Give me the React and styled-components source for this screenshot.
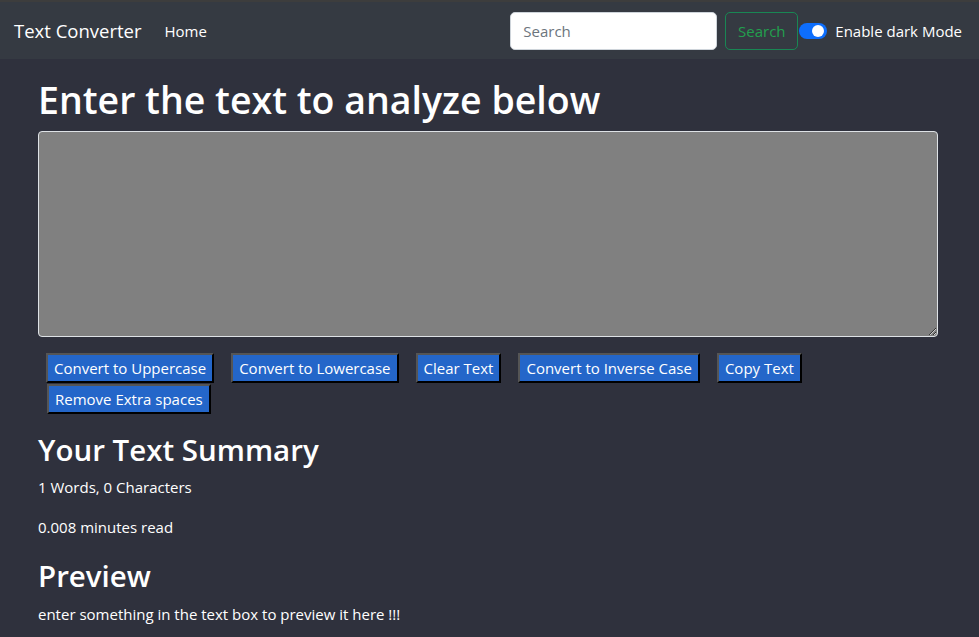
import React, { useState } from 'react';
import styled, { createGlobalStyle } from 'styled-components';

const GlobalStyle = createGlobalStyle`
  * { box-sizing: border-box; }
  html, body {
    margin: 0;
    padding: 0;
    height: 100%;
    background: #2f313d;
  }
  body {
    font-family: "Open Sans", "Noto Sans", sans-serif;
    color: #ffffff;
  }
`;

const Page = styled.div`
  min-height: 637px;
  background: #2f313d;
  border-top: 2px solid #3d3d3d;
  border-bottom: 3px solid #8a8a8a;
  display: flex;
  flex-direction: column;
`;

const Nav = styled.nav`
  background: #353a42;
  height: 57px;
  display: flex;
  align-items: center;
  padding: 0 17px 0 14px;
`;

const Brand = styled.a`
  font-size: 18.5px;
  color: #fff;
  text-decoration: none;
  margin-right: 23px;
`;

const NavLink = styled.a`
  font-size: 15px;
  color: #fff;
  text-decoration: none;
`;

const NavRight = styled.div`
  margin-left: auto;
  display: flex;
  align-items: center;
`;

const SearchInput = styled.input`
  width: 207px;
  height: 38px;
  border: 1px solid #ced4da;
  border-radius: 5px;
  padding: 0 12px;
  font: inherit;
  font-size: 15px;
  color: #212529;
  margin-right: 8px;
  &::placeholder { color: #6c757d; }
`;

const SearchButton = styled.button`
  height: 38px;
  width: 73px;
  background: transparent;
  border: 1px solid #198754;
  color: #22a04e;
  border-radius: 5px;
  font: inherit;
  font-size: 15px;
`;

const Switch = styled.span`
  width: 28px;
  height: 16px;
  border-radius: 8px;
  background: #0d6efd;
  position: relative;
  margin: 0 8px 0 1px;
  &::after {
    content: '';
    position: absolute;
    right: 3px;
    top: 2px;
    width: 12px;
    height: 12px;
    border-radius: 50%;
    background: #fff;
  }
`;

const SwitchLabel = styled.span`
  font-size: 15px;
  color: #fff;
`;

const Container = styled.main`
  padding: 0 41px 0 38px;
`;

const Title = styled.h1`
  font-size: 37.5px;
  font-weight: 600;
  margin: 18px 0 9px;
  line-height: 1.2;
`;

const TextArea = styled.textarea`
  display: block;
  width: 100%;
  height: 206px;
  background: #808080;
  border: 1px solid #dee2e6;
  border-radius: 4px;
  color: #fff;
  font: inherit;
`;

const ButtonRow = styled.div`
  display: flex;
  flex-wrap: wrap;
  padding-top: 16px;
  row-gap: 1px;
`;

const ActionButton = styled.button`
  margin: 0 8px;
  background: #2466c9;
  color: #fff;
  font: inherit;
  font-size: 15px;
  height: 30px;
  padding: 0 6px;
  border: 2px outset #555;
  border-right-color: #000;
  border-bottom-color: #000;
  & + & { margin-left: 9px; }
`;

const Heading = styled.h2`
  font-size: 29.5px;
  font-weight: 600;
  margin: ${p => p.$top}px 0 8px;
  line-height: 1.2;
`;

const Para = styled.p`
  font-size: 15px;
  margin: 0 0 16px;
  line-height: 24px;
`;

const buttons = [
  'Convert to Uppercase',
  'Convert to Lowercase',
  'Clear Text',
  'Convert to Inverse Case',
  'Copy Text',
  'Remove Extra spaces',
];

export default function App() {
  const [text, setText] = useState('');
  return (
    <>
      <GlobalStyle />
      <Page>
        <Nav>
          <Brand href="#">Text Converter</Brand>
          <NavLink href="#">Home</NavLink>
          <NavRight>
            <SearchInput placeholder="Search" />
            <SearchButton>Search</SearchButton>
            <Switch />
            <SwitchLabel>Enable dark Mode</SwitchLabel>
          </NavRight>
        </Nav>
        <Container>
          <Title>Enter the text to analyze below</Title>
          <TextArea value={text} onChange={e => setText(e.target.value)} />
          <ButtonRow>
            {buttons.map(b => (
              <ActionButton key={b}>{b}</ActionButton>
            ))}
          </ButtonRow>
          <Heading $top={18}>Your Text Summary</Heading>
          <Para>1 Words, 0 Characters</Para>
          <Para>0.008 minutes read</Para>
          <Heading $top={19}>Preview</Heading>
          <Para>enter something in the text box to preview it here !!!</Para>
        </Container>
      </Page>
    </>
  );
}
